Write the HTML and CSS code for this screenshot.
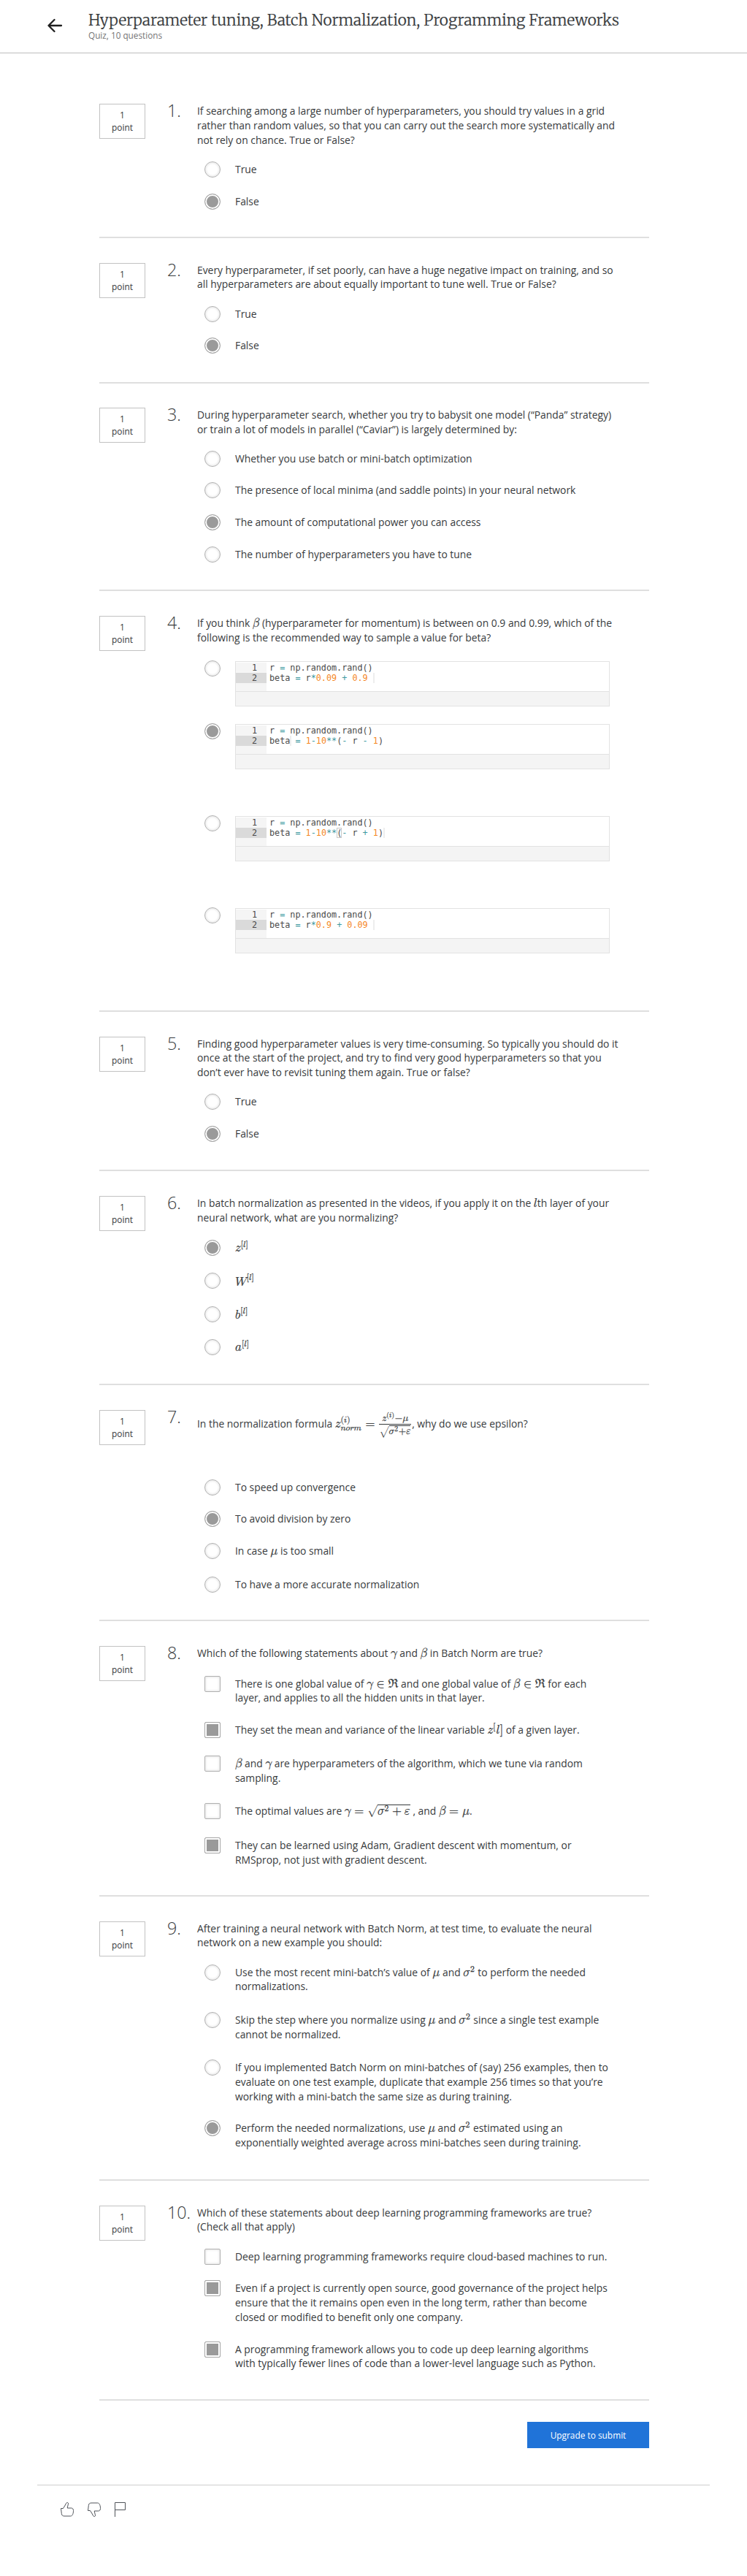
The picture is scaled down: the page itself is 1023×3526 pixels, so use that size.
FILE: index.html
```html
<!DOCTYPE html>
<html lang="en">
<head>
<meta charset="utf-8">
<title>Quiz</title>
<link rel="stylesheet" href="styles.css">
</head>
<body>
<header class="header">
  <svg class="back" width="22" height="22" viewBox="0 0 22 22"><path d="M20 11H2.5M10.5 3 2.5 11l8 8" fill="none" stroke="#1f1f1f" stroke-width="2.3" stroke-linecap="round" stroke-linejoin="round"/></svg>
  <div>
    <h1 class="title">Hyperparameter tuning, Batch Normalization, Programming Frameworks</h1>
    <p class="subtitle">Quiz, 10 questions</p>
  </div>
</header>
<main class="quiz">
  <section class="question q1">
    <div class="points">1<br>point</div><div class="number">1.</div>
    <div class="body">
      <div class="prompt">If searching among a large number of hyperparameters, you should try values in a grid<br>rather than random values, so that you can carry out the search more systematically and<br>not rely on chance. True or False?</div>
      <ul class="options">
        <li class="option"><i class="radio"></i><div class="label">True</div></li>
        <li class="option"><i class="radio on"></i><div class="label">False</div></li>
      </ul>
    </div>
  </section>
  <section class="question q2">
    <div class="points">1<br>point</div><div class="number">2.</div>
    <div class="body">
      <div class="prompt">Every hyperparameter, if set poorly, can have a huge negative impact on training, and so<br>all hyperparameters are about equally important to tune well. True or False?</div>
      <ul class="options">
        <li class="option"><i class="radio"></i><div class="label">True</div></li>
        <li class="option"><i class="radio on"></i><div class="label">False</div></li>
      </ul>
    </div>
  </section>
  <section class="question q3">
    <div class="points">1<br>point</div><div class="number">3.</div>
    <div class="body">
      <div class="prompt">During hyperparameter search, whether you try to babysit one model (“Panda” strategy)<br>or train a lot of models in parallel (“Caviar”) is largely determined by:</div>
      <ul class="options">
        <li class="option"><i class="radio"></i><div class="label">Whether you use batch or mini-batch optimization</div></li>
        <li class="option"><i class="radio"></i><div class="label">The presence of local minima (and saddle points) in your neural network</div></li>
        <li class="option"><i class="radio on"></i><div class="label">The amount of computational power you can access</div></li>
        <li class="option"><i class="radio"></i><div class="label">The number of hyperparameters you have to tune</div></li>
      </ul>
    </div>
  </section>
  <section class="question q4">
    <div class="points">1<br>point</div><div class="number">4.</div>
    <div class="body">
      <div class="prompt">If you think <math><mi>β</mi></math> (hyperparameter for momentum) is between on 0.9 and 0.99, which of the<br>following is the recommended way to sample a value for beta?</div>
      <ul class="options">
        <li class="option"><i class="radio"></i><div class="code"><div class="line"><span class="ln">1</span><pre>r <b>=</b> np.random.rand()</pre></div><div class="line active"><span class="ln">2</span><pre>beta <b>=</b> r<b>*</b><em>0.09</em> <b>+</b> <em>0.9</em> <s></s></pre></div><div class="rest"></div><div class="bar"></div></div></li>
        <li class="option"><i class="radio on"></i><div class="code"><div class="line"><span class="ln">1</span><pre>r <b>=</b> np.random.rand()</pre></div><div class="line active"><span class="ln">2</span><pre>beta<s></s> <b>=</b> <em>1</em><b>-</b><em>10</em><b>**</b>(<b>-</b> r <b>-</b> <em>1</em>)</pre></div><div class="rest"></div><div class="bar"></div></div></li>
        <li class="option"><i class="radio"></i><div class="code"><div class="line"><span class="ln">1</span><pre>r <b>=</b> np.random.rand()</pre></div><div class="line active"><span class="ln">2</span><pre>beta <b>=</b> <em>1</em><b>-</b><em>10</em><b>**</b><span class="match">(</span><b>-</b> r <b>+</b> <em>1</em>)<s></s></pre></div><div class="rest"></div><div class="bar"></div></div></li>
        <li class="option"><i class="radio"></i><div class="code"><div class="line"><span class="ln">1</span><pre>r <b>=</b> np.random.rand()</pre></div><div class="line active"><span class="ln">2</span><pre>beta <b>=</b> r<b>*</b><em>0.9</em> <b>+</b> <em>0.09</em> <s></s></pre></div><div class="rest"></div><div class="bar"></div></div></li>
      </ul>
    </div>
  </section>
  <section class="question q5">
    <div class="points">1<br>point</div><div class="number">5.</div>
    <div class="body">
      <div class="prompt">Finding good hyperparameter values is very time-consuming. So typically you should do it<br>once at the start of the project, and try to find very good hyperparameters so that you<br>don’t ever have to revisit tuning them again. True or false?</div>
      <ul class="options">
        <li class="option"><i class="radio"></i><div class="label">True</div></li>
        <li class="option"><i class="radio on"></i><div class="label">False</div></li>
      </ul>
    </div>
  </section>
  <section class="question q6">
    <div class="points">1<br>point</div><div class="number">6.</div>
    <div class="body">
      <div class="prompt">In batch normalization as presented in the videos, if you apply it on the <math><mi>l</mi></math>th layer of your<br>neural network, what are you normalizing?</div>
      <ul class="options">
        <li class="option"><i class="radio on"></i><div class="label"><math><msup><mi>z</mi><mrow><mo stretchy="false">[</mo><mi>l</mi><mo stretchy="false">]</mo></mrow></msup></math></div></li>
        <li class="option"><i class="radio"></i><div class="label"><math><msup><mi>W</mi><mrow><mo stretchy="false">[</mo><mi>l</mi><mo stretchy="false">]</mo></mrow></msup></math></div></li>
        <li class="option"><i class="radio"></i><div class="label"><math><msup><mi>b</mi><mrow><mo stretchy="false">[</mo><mi>l</mi><mo stretchy="false">]</mo></mrow></msup></math></div></li>
        <li class="option"><i class="radio"></i><div class="label"><math><msup><mi>a</mi><mrow><mo stretchy="false">[</mo><mi>l</mi><mo stretchy="false">]</mo></mrow></msup></math></div></li>
      </ul>
    </div>
  </section>
  <section class="question q7">
    <div class="points">1<br>point</div><div class="number">7.</div>
    <div class="body">
      <div class="prompt">In the normalization formula <math><msubsup><mi>z</mi><mrow><mi>n</mi><mi>o</mi><mi>r</mi><mi>m</mi></mrow><mrow><mo stretchy="false">(</mo><mi>i</mi><mo stretchy="false">)</mo></mrow></msubsup><mo>=</mo><mfrac class="frac"><mrow><msup><mi>z</mi><mrow><mo stretchy="false">(</mo><mi>i</mi><mo stretchy="false">)</mo></mrow></msup><mo lspace="0" rspace="0">−</mo><mi>μ</mi></mrow><msqrt><msup><mi>σ</mi><mn>2</mn></msup><mo lspace="0" rspace="0">+</mo><mi>ε</mi></msqrt></mfrac></math>, why do we use epsilon?</div>
      <ul class="options">
        <li class="option"><i class="radio"></i><div class="label">To speed up convergence</div></li>
        <li class="option"><i class="radio on"></i><div class="label">To avoid division by zero</div></li>
        <li class="option"><i class="radio"></i><div class="label">In case <math><mi>μ</mi></math> is too small</div></li>
        <li class="option"><i class="radio"></i><div class="label">To have a more accurate normalization</div></li>
      </ul>
    </div>
  </section>
  <section class="question q8">
    <div class="points">1<br>point</div><div class="number">8.</div>
    <div class="body">
      <div class="prompt">Which of the following statements about <math><mi>γ</mi></math> and <math><mi>β</mi></math> in Batch Norm are true?</div>
      <ul class="options">
        <li class="option"><i class="check"></i><div class="label">There is one global value of <math><mi>γ</mi><mo>∈</mo><mi>ℜ</mi></math> and one global value of <math><mi>β</mi><mo>∈</mo><mi>ℜ</mi></math> for each<br>layer, and applies to all the hidden units in that layer.</div></li>
        <li class="option"><i class="check on"></i><div class="label">They set the mean and variance of the linear variable <math><msup><mi>z</mi><mo stretchy="false">[</mo></msup><mi>l</mi><mo stretchy="false">]</mo></math> of a given layer.</div></li>
        <li class="option"><i class="check"></i><div class="label"><math><mi>β</mi></math> and <math><mi>γ</mi></math> are hyperparameters of the algorithm, which we tune via random<br>sampling.</div></li>
        <li class="option root"><i class="check"></i><div class="label">The optimal values are <math><mi>γ</mi><mo>=</mo><msqrt><msup><mi>σ</mi><mn>2</mn></msup><mo>+</mo><mi>ε</mi></msqrt></math>, and <math><mi>β</mi><mo>=</mo><mi>μ</mi></math>.</div></li>
        <li class="option"><i class="check on"></i><div class="label">They can be learned using Adam, Gradient descent with momentum, or<br>RMSprop, not just with gradient descent.</div></li>
      </ul>
    </div>
  </section>
  <section class="question q9">
    <div class="points">1<br>point</div><div class="number">9.</div>
    <div class="body">
      <div class="prompt">After training a neural network with Batch Norm, at test time, to evaluate the neural<br>network on a new example you should:</div>
      <ul class="options">
        <li class="option"><i class="radio"></i><div class="label">Use the most recent mini-batch’s value of <math><mi>μ</mi></math> and <math><msup><mi>σ</mi><mn>2</mn></msup></math> to perform the needed<br>normalizations.</div></li>
        <li class="option"><i class="radio"></i><div class="label">Skip the step where you normalize using <math><mi>μ</mi></math> and <math><msup><mi>σ</mi><mn>2</mn></msup></math> since a single test example<br>cannot be normalized.</div></li>
        <li class="option"><i class="radio"></i><div class="label">If you implemented Batch Norm on mini-batches of (say) 256 examples, then to<br>evaluate on one test example, duplicate that example 256 times so that you’re<br>working with a mini-batch the same size as during training.</div></li>
        <li class="option"><i class="radio on"></i><div class="label">Perform the needed normalizations, use <math><mi>μ</mi></math> and <math><msup><mi>σ</mi><mn>2</mn></msup></math> estimated using an<br>exponentially weighted average across mini-batches seen during training.</div></li>
      </ul>
    </div>
  </section>
  <section class="question q10">
    <div class="points">1<br>point</div><div class="number">10.</div>
    <div class="body">
      <div class="prompt">Which of these statements about deep learning programming frameworks are true?<br>(Check all that apply)</div>
      <ul class="options">
        <li class="option"><i class="check"></i><div class="label">Deep learning programming frameworks require cloud-based machines to run.</div></li>
        <li class="option"><i class="check on"></i><div class="label">Even if a project is currently open source, good governance of the project helps<br>ensure that the it remains open even in the long term, rather than become<br>closed or modified to benefit only one company.</div></li>
        <li class="option"><i class="check on"></i><div class="label">A programming framework allows you to code up deep learning algorithms<br>with typically fewer lines of code than a lower-level language such as Python.</div></li>
      </ul>
    </div>
  </section>
  <button class="submit">Upgrade to submit</button>
</main>
<footer class="footer">
  <svg width="20" height="22" viewBox="0 0 20 22"><path d="M1.500 9.500H4.500C6 7 7.500 5 8.800 2.200C9.600.8 11.800 1.300 11.500 3.200C11.300 5.200 10.300 7 10.200 9H15.500C17.500 9 18.500 10.500 18.500 12.500C18.500 16 17.500 20 14.500 20H6C3.500 20 2.500 18.500 2.300 16.500L1.500 9.500Z"/></svg>
  <svg width="20" height="22" viewBox="0 0 20 22"><g transform="rotate(180 10 11)"><path d="M18.500 9.500H15.500C14 7 12.500 5 11.200 2.200C10.400.8 8.200 1.300 8.500 3.200C8.700 5.200 9.700 7 9.800 9H4.500C2.500 9 1.500 10.500 1.500 12.500C1.500 16 2.500 20 5.500 20H14C16.500 20 17.500 18.500 17.700 16.500L18.500 9.500Z"/></g></svg>
  <svg width="20" height="22" viewBox="0 0 20 22"><path d="M1.500 21V1.500H15.500V11.500H1.500"/></svg>
</footer>
</body>
</html>
```
FILE: styles.css
```css
* { box-sizing: border-box; }
body { margin: 0; background: #fff; color: #373a3c; font: 13.86px/19.8px "Open Sans", "Noto Sans", sans-serif; }
.header { height: 73px; display: flex; gap: 35px; padding: 0 0 0 64px; border-bottom: 1px solid #bdbdbd; }
.back { margin-top: 24px; flex: none; }
.title { margin: 14.5px 0 0; font: 300 20.82px/27px Merriweather, "Noto Serif", "DejaVu Serif", serif; white-space: nowrap; -webkit-text-stroke: 0.2px; }
.subtitle { margin: -2px 0 0; font-size: 11.76px; line-height: 17px; color: #757575; }
.quiz { width: 753px; margin: 35px 0 0 136px; display: flex; flex-direction: column; }
.question { display: flex; padding-top: 34px; border-bottom: 2px solid #dfdfdf; white-space: nowrap; }
.q1 { height: 218px; }
.q2 { height: 199px; }
.q3 { height: 284px; }
.q4 { height: 576px; }
.q5 { height: 218px; }
.q6 { height: 293px; }
.q7 { height: 323px; }
.q8 { height: 377px; }
.q9 { height: 389px; }
.q10 { height: 301px; }
.q2, .q5, .q9, .q10 { padding-top: 33.5px; }
.q3 { padding-top: 33px; }
.points { flex: none; width: 63px; height: 48px; padding-top: 6px; border: 1px solid #c2c2c2; text-align: center; font-size: 11.88px; line-height: 17.4px; }
.number { flex: none; width: 41px; margin: -7px 0 0 30px; font-size: 23.3px; line-height: 32px; font-weight: 300; }
.prompt { height: 39.6px; }
.q1 .prompt, .q5 .prompt { height: 59.4px; }
.q8 .prompt { height: 21px; }
.q7 .prompt { height: 75px; padding-top: 2px; }
.options { margin: 19.6px 0 0; padding: 0 0 0 10px; list-style: none; }
.q3 .options, .q5 .options { margin-top: 19px; }
.q4 .options { margin-top: 21.6px; }
.q6 .options { margin-top: 20.6px; }
.option { display: flex; gap: 20px; margin-bottom: 21.8px; }
.label { padding: 1px 0; }
.radio, .check { flex: none; width: 22px; height: 22px; border: 1px solid #b0b0b0; box-shadow: inset 0 0 3px 1px #e6e6e6; }
.radio { border-radius: 50%; }
.check { border-radius: 2px; }
.radio.on, .check.on { background: #9a9a9a; border-color: #a6a6a6; box-shadow: inset 0 0 0 2px #fff; }
.q4 .option { height: 126px; margin: 0; }
.q4 .option:first-child { height: 86px; }
.q6 .option { height: 45.2px; margin: 0; }
.q7 .option { height: 43.6px; margin: 0; }
.q7 .option:nth-child(3) { height: 46px; }
.q8 .option { height: 46px; margin: 0; }
.q8 .option:first-child { height: 63.3px; }
.q8 .option:nth-child(3) { height: 64.7px; }
.q8 .option:nth-child(4) { height: 47.6px; }
.q9 .option { height: 65.2px; margin: 0; }
.q9 .option:nth-child(3) { height: 83.2px; }
math { font-family: "Latin Modern Math", "STIX Two Math", "Liberation Serif", serif; font-size: 16.77px; line-height: 0; -webkit-text-stroke: 0.25px; }
.frac { font-size: 1.14em; }
.code { width: 513px; height: 62px; margin-top: 1px; border: 1px solid #e2e2e2; font: 11.77px/14px "DejaVu Sans Mono", monospace; color: #4a4a4a; display: flex; flex-direction: column; }
.line { display: flex; height: 14px; }
.line:first-child { margin-top: 1px; }
.ln { width: 42px; padding-right: 13px; text-align: right; background: #f5f5f5; }
.active .ln { background: #dadada; }
.line pre { margin: 0 0 0 4px; font: inherit; }
.line b { font-weight: 400; color: #3e999f; }
.line em { font-style: normal; color: #f5871f; }
.line s { display: inline-block; width: 2px; height: 14px; margin: 0 -2px 0 0; background: #eee; vertical-align: top; }
.match { box-shadow: inset 0 0 0 1px #c8c8c8; }
.rest { width: 42px; height: 11px; background: #f5f5f5; }
.bar { flex: 1; background: #f4f4f4; border-top: 1px solid #e2e2e2; }
.submit { align-self: flex-end; width: 167px; height: 36px; margin-top: 29px; padding: 0; border: 0; background: #2073d8; color: #fff; font: 11.88px/36px "Open Sans", sans-serif; }
.footer { width: 921px; margin: 50px 0 0 51px; padding: 22px 0 0 31px; border-top: 1px solid #cfcfcf; display: flex; gap: 17px; }
.footer path { fill: none; stroke: #50545a; stroke-width: 1; }
```
